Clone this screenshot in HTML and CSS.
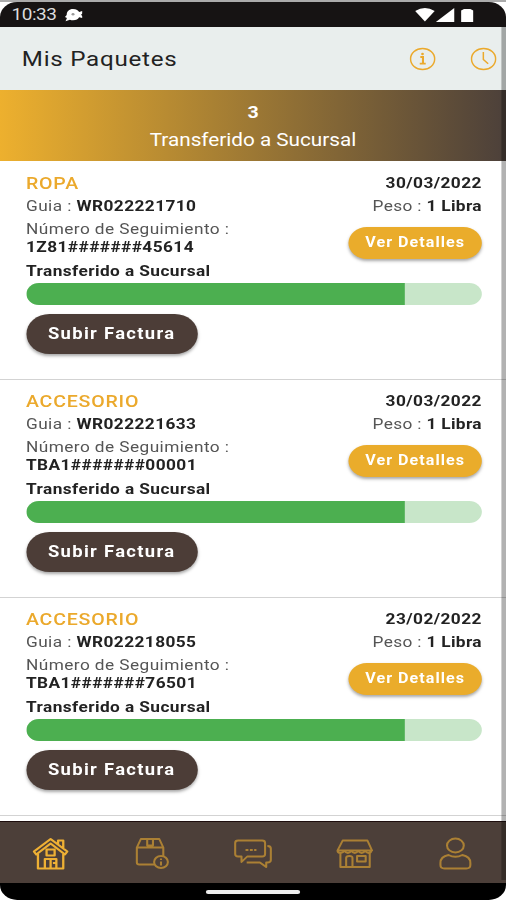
FILE: index.html
```html
<!DOCTYPE html>
<html lang="es">
<head>
  <meta charset="utf-8">
  <title>Mis Paquetes</title>
  <link rel="stylesheet" href="styles.css">
</head>
<body>
<div class="phone">
  <div class="status">
    <span class="clock">10:33</span>
    <svg class="notif" width="16" height="14" viewBox="0 0 16 14"><path fill="#fff" d="M7.500 1c3 0 4.700 1.500 5.300 3l2.700-1v2.500l-1 1.300 1 1.200V10l-2.700-.7c-.8 1.700-2.500 3-5.300 3-1 0-2-.2-2.700-.6L1 13.300 2.200 10 .5 9 2 7C2 3.500 4 1 7.500 1z"/><circle cx="7.500" cy="6.200" r="1.300" fill="#999"/></svg>
    <svg class="signals" width="51" height="16" viewBox="0 0 51 16"><g fill="#fff"><path d="M0 4q8.500-6 17 0L8.500 14.500z"/><path d="M18 15L34 1v14z"/><path d="M40 15V3.500L42.500 2h5.500l2.500 1.500V15z"/></g></svg>
  </div>
  <div class="header">
    <h1>Mis Paquetes</h1>
    <svg width="23" height="24" viewBox="0 0 23 24"><g fill="none" stroke="#eba92c" stroke-width="1.300"><circle cx="11.500" cy="12" r="10.500"/><path stroke-width="1.800" d="M9.500 10h2.300v6.500M9 16.700h5.200"/></g><circle cx="11.400" cy="7" r="1.200" fill="#eba92c"/></svg>
    <svg width="23" height="24" viewBox="0 0 23 24"><g fill="none" stroke="#eba92c" stroke-width="1.300"><circle cx="11.500" cy="12" r="10.500"/><path d="M11.300 5v7.500l4.200 4.200"/></g></svg>
  </div>
  <div class="banner">
    <b>3</b>
    <span>Transferido a Sucursal</span>
  </div>

  <div class="list">
    <div class="package">
      <div class="info">
        <div class="left">
          <h2>ROPA</h2>
          <p class="guia">Guia : <b>WR022221710</b></p>
          <p class="track">Número de Seguimiento :</p>
          <p class="track"><b>1Z81#######45614</b></p>
        </div>
        <div class="right">
          <p class="date">30/03/2022</p>
          <p class="guia">Peso : <b>1 Libra</b></p>
          <button class="details">Ver Detalles</button>
        </div>
      </div>
      <p class="state">Transferido a Sucursal</p>
      <div class="progress"><div class="bar" style="width:83%"></div></div>
      <button class="upload">Subir Factura</button>
    </div>

    <div class="package">
      <div class="info">
        <div class="left">
          <h2>ACCESORIO</h2>
          <p class="guia">Guia : <b>WR022221633</b></p>
          <p class="track">Número de Seguimiento :</p>
          <p class="track"><b>TBA1#######00001</b></p>
        </div>
        <div class="right">
          <p class="date">30/03/2022</p>
          <p class="guia">Peso : <b>1 Libra</b></p>
          <button class="details">Ver Detalles</button>
        </div>
      </div>
      <p class="state">Transferido a Sucursal</p>
      <div class="progress"><div class="bar" style="width:83%"></div></div>
      <button class="upload">Subir Factura</button>
    </div>

    <div class="package">
      <div class="info">
        <div class="left">
          <h2>ACCESORIO</h2>
          <p class="guia">Guia : <b>WR022218055</b></p>
          <p class="track">Número de Seguimiento :</p>
          <p class="track"><b>TBA1#######76501</b></p>
        </div>
        <div class="right">
          <p class="date">23/02/2022</p>
          <p class="guia">Peso : <b>1 Libra</b></p>
          <button class="details">Ver Detalles</button>
        </div>
      </div>
      <p class="state">Transferido a Sucursal</p>
      <div class="progress"><div class="bar" style="width:83%"></div></div>
      <button class="upload">Subir Factura</button>
    </div>
  </div>

  <div class="nav">
    <!-- home -->
    <a class="active"><svg width="32" height="34" viewBox="0 0 32 34"><path d="M1.500 15.500L16 3l14.500 12.500-2 3L16 7.500 3.500 18.500zM5 18v14.500h22V18M22.500 8V4.500h4.500v8M11 32V23h10v9M16 23v9M12.500 13.500h7v6h-7zM18 27h2"/></svg></a>
    <!-- package -->
    <a><svg width="32" height="34" viewBox="0 0 32 34"><path d="M18 28.500H5q-2 0-2-2V11.500L6.500 3h16L26 11.500V20M3 11.500h23M12 3v6.500h5V3"/><circle cx="24" cy="26" r="6"/><path d="M24 25.500v4M24 22.500v1.500"/></svg></a>
    <!-- messages -->
    <a><svg width="34" height="34" viewBox="0 0 34 34"><path d="M4 4.500h21q2.500 0 2.500 2.500v11q0 2.500-2.500 2.500H12L7 26v-5.500H4q-2.500 0-2.500-2.500V7Q1.500 4.500 4 4.500z"/><path d="M29.500 10q3 0 3 2.500v11.500q0 2.500-3 2.500h-1V31l-5.500-4.500H11.500M10.500 14H13M14.300 14h2.500M18 14h2"/></svg></a>
    <!-- store -->
    <a><svg width="33" height="34" viewBox="0 0 33 34"><path d="M6 4.500h21.500l4 10H1.500zM1.500 14.500q0 2.500 2.500 2.500t3.500-2.500q1 2.500 3 2.500t3-2.500q1 2.500 3 2.500t3-2.500q1 2.500 3 2.500t3-2.500q1 2.500 3 2.500t2.500-2.500M4 17v14h25.500V17M9 31V22q0-2 2.800-2t2.700 2v9M18.500 20h7.500v5.500h-7.500z"/></svg></a>
    <!-- profile -->
    <a><svg width="30" height="34" viewBox="0 0 30 34"><ellipse cx="15" cy="9.500" rx="7.300" ry="7"/><path d="M9 19Q2 20.500 2 27v2q0 3.500 3.500 3.500h19Q28 32.500 28 29v-2q0-6.500-7-8-6 3.500-12 0z"/></svg></a>
  </div>
  <div class="gesture"><div></div></div>
  <div class="scroll"></div>
</div>
</body>
</html>
```
FILE: styles.css
```css
body {
  margin: 0;
  width: 506px;
  height: 900px;
  overflow: hidden;
  background: linear-gradient(#ababab 0 2px, #fff 2px);
  font-family: Roboto, "Liberation Sans", sans-serif;
}
h1, h2, p {
  margin: 0;
}

/* 440px wide layout, stretched to the full window */
.phone {
  position: relative;
  display: flex;
  flex-direction: column;
  width: 440px;
  height: 898px;
  margin-top: 2px;
  overflow: hidden;
  border-radius: 15px;
  background: #fff;
  transform: scaleX(1.15);
  transform-origin: 0 0;
}

.status {
  display: flex;
  align-items: center;
  box-sizing: border-box;
  height: 25px;
  padding: 0 28px 0 10px;
  background: #161313;
  color: #ddd;
}
.clock {
  font-size: 16.5px;
  letter-spacing: -.4px;
  width: 46px;
}
.signals {
  margin-left: auto;
}

.header {
  display: flex;
  align-items: center;
  height: 63px;
  padding: 0 8px 0 19px;
  background: #e9eeed;
}
.header h1 {
  flex: 1;
  font-size: 21px;
  font-weight: 400;
  letter-spacing: .65px;
  color: #222;
}
.header svg + svg {
  margin-left: 30.5px;
}

.banner {
  display: flex;
  flex-direction: column;
  align-items: center;
  height: 62px;
  padding-top: 9px;
  margin-bottom: 1px;
  background: linear-gradient(90deg, #edb02e, #4c403a);
  color: #fff;
}
.banner b {
  font-size: 17px;
  line-height: 27px;
}
.banner span {
  font-size: 18px;
  line-height: 27px;
}

.list {
  height: 659px;
}
.package {
  box-sizing: border-box;
  height: 218px;
  padding: 9px 21px 0 22.6px;
  border-bottom: 1px solid #d3d3d3;
  font-size: 15px;
  color: #555;
  letter-spacing: .37px;
}
.package b, .state, .date {
  font-weight: 700;
  color: #222;
}
.info {
  display: flex;
  justify-content: space-between;
}
.right {
  text-align: right;
}
.package h2 {
  font-size: 17px;
  font-weight: 500;
  line-height: 24px;
  letter-spacing: .7px;
  color: #eba92c;
}
.date {
  line-height: 25px;
  margin-bottom: -1px;
}
.guia {
  line-height: 23px;
  margin-bottom: 2px;
}
.right .guia {
  letter-spacing: .3px;
}
.track {
  line-height: 18px;
}
.state {
  line-height: 18px;
  margin: 6px 0 3px;
}

button {
  display: block;
  border: 0;
  padding: 0;
  border-radius: 20px;
  color: #fff;
  font-family: inherit;
  font-weight: 700;
  box-shadow: 0 2px 3px rgba(0, 0, 0, .35);
}
.details {
  width: 116px;
  height: 32px;
  margin: 9px 0 -9px;
  padding-bottom: 2px;
  background: #eaac2b;
  font-size: 14px;
  letter-spacing: .9px;
}
.upload {
  width: 149px;
  height: 40px;
  margin-top: 9px;
  padding-bottom: 1px;
  background: #4c3d37;
  font-size: 16px;
  letter-spacing: 1.15px;
}

.progress {
  height: 22px;
  border-radius: 11px;
  overflow: hidden;
  background: #c8e6c9;
}
.bar {
  height: 100%;
  background: #4caf50;
}

.nav {
  display: flex;
  justify-content: space-around;
  align-items: center;
  height: 61px;
  border-top: 1px solid #1d0d0d;
  background: #4c3f39;
}
.nav a {
  display: flex;
  justify-content: center;
  width: 88px;
}
.nav svg {
  fill: none;
  stroke: #ab8034;
  stroke-width: 1.8;
  stroke-linejoin: round;
}
.nav .active svg {
  stroke: #eeb034;
  stroke-width: 2;
}

.gesture {
  display: flex;
  justify-content: center;
  align-items: center;
  flex: 1;
  background: #000;
}
.gesture div {
  width: 82px;
  height: 4px;
  border-radius: 2px;
  background: #eee;
}

.scroll {
  position: absolute;
  top: 25px;
  right: 0;
  width: 4px;
  height: 853px;
  background: rgba(0, 0, 0, .3);
}
```
